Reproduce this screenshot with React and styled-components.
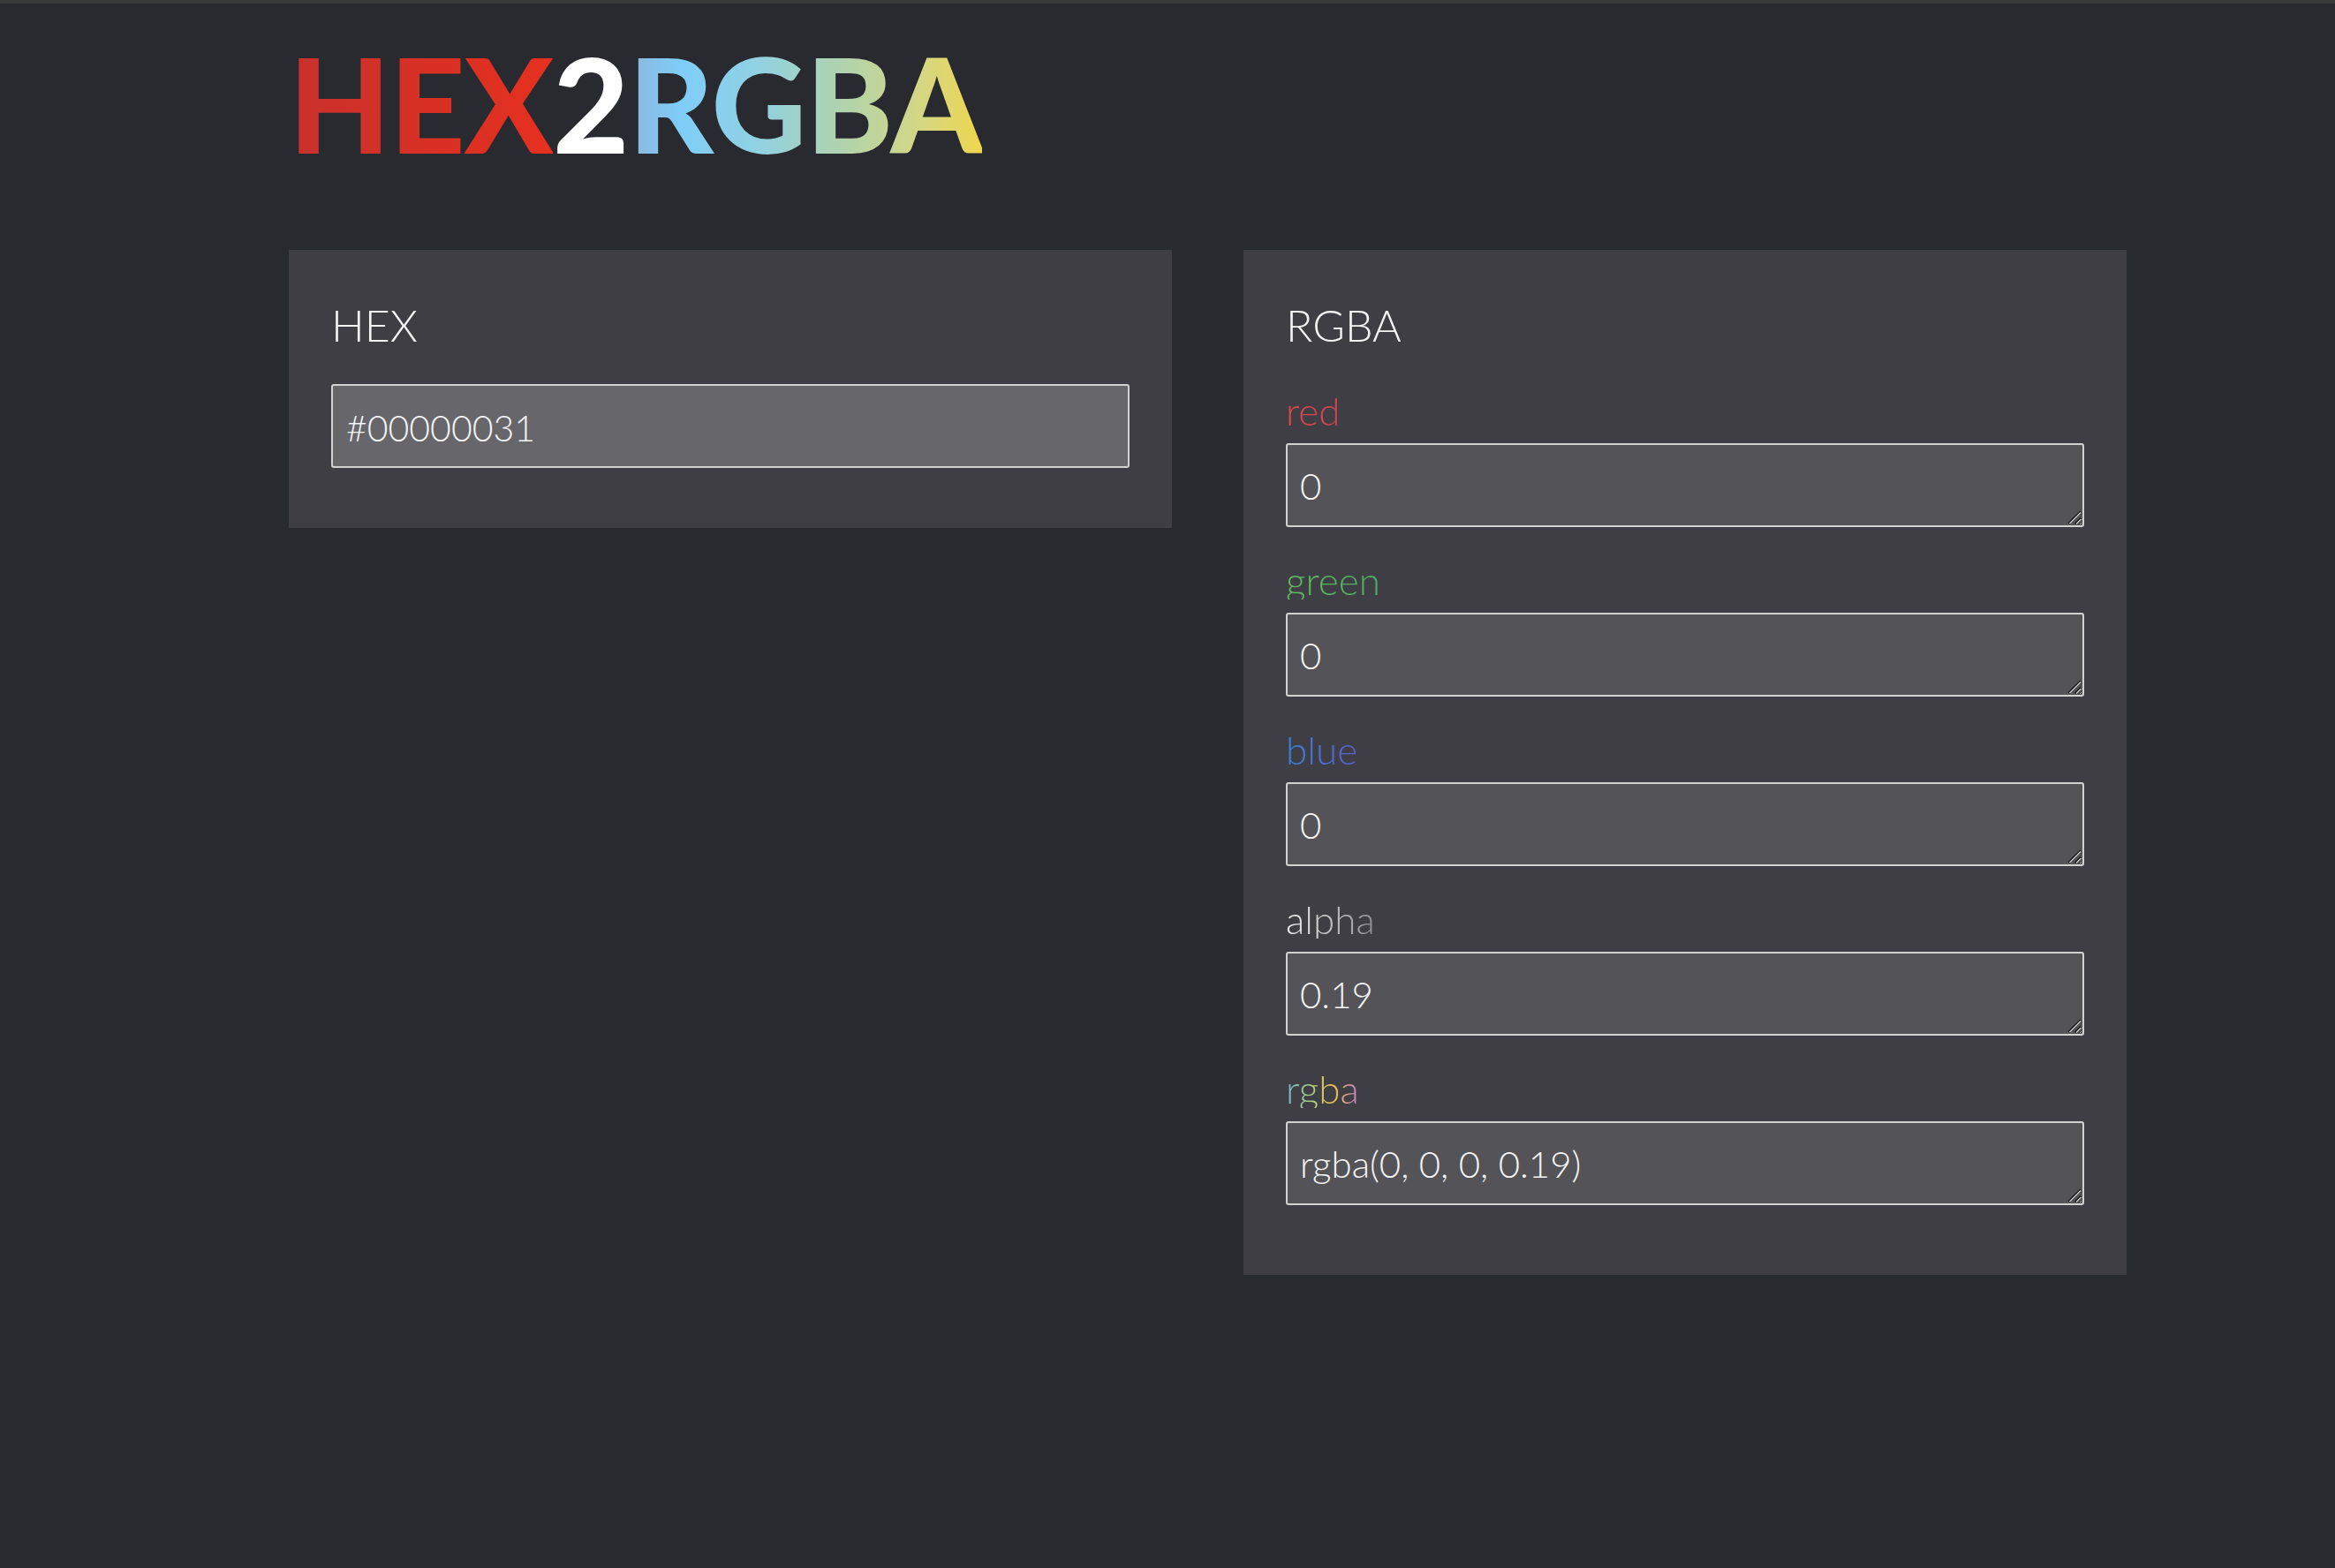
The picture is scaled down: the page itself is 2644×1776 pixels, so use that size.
import React, { useState } from "react";
import styled, { createGlobalStyle } from "styled-components";

const GlobalStyle = createGlobalStyle`
  html, body {
    margin: 0;
    padding: 0;
    background: #292a2f;
  }
  body {
    border-top: 4px solid #37383c;
    font-family: Lato, "Open Sans", sans-serif;
    color: #f2f2f2;
  }
`;

const Page = styled.div`
  padding: 38px 0 120px 327px;
`;

const Title = styled.h1`
  margin: 0 0 92px;
  font-family: Lato, sans-serif;
  font-weight: 900;
  font-size: 149px;
  line-height: 1;
  letter-spacing: -1px;
  white-space: nowrap;
`;

const Part = styled.span`
  background: ${({ $bg }) => $bg};
  -webkit-background-clip: text;
  background-clip: text;
  color: transparent;
`;

const Columns = styled.div`
  display: flex;
  align-items: flex-start;
  gap: 81px;
`;

const Panel = styled.section`
  width: 1000px;
  box-sizing: border-box;
  background: #3f3e45;
  padding: 60px 48px ${({ $bottom }) => $bottom}px;
  display: flex;
  flex-direction: column;
`;

const Heading = styled.h2`
  margin: 0;
  font-weight: 300;
  font-size: 50px;
  line-height: 50px;
  color: #f4f4f4;
`;

const HexInput = styled.input`
  margin-top: 42px;
  width: 100%;
  height: 95px;
  box-sizing: border-box;
  border: 2px solid #d2d2d2;
  border-radius: 3px;
  background: #67666b;
  color: #f4f4f4;
  padding: 4px 15px 0;
  font-family: Lato, sans-serif;
  font-weight: 300;
  font-size: 41px;
  outline: none;
`;

const Field = styled.div`
  display: flex;
  flex-direction: column;
  margin-top: ${({ $first }) => ($first ? 50 : 38)}px;
`;

const Label = styled.label`
  align-self: flex-start;
  font-weight: 300;
  font-size: 44px;
  line-height: 44px;
  margin-bottom: 15px;
  background: ${({ $bg }) => $bg};
  -webkit-background-clip: text;
  background-clip: text;
  color: transparent;
`;

const AreaBox = styled.div`
  position: relative;
`;

const Area = styled.textarea`
  display: block;
  width: 100%;
  height: 95px;
  box-sizing: border-box;
  border: 2px solid #d2d2d2;
  border-radius: 3px;
  background: #545358;
  color: #f4f4f4;
  padding: 25px 14px 0;
  font-family: Lato, sans-serif;
  font-weight: 300;
  font-size: 42px;
  line-height: 42px;
  outline: none;
  resize: both;
`;

/* Chrome's resize grip, drawn over the corner of the textarea */
const Grip = styled.span`
  position: absolute;
  right: 4px;
  bottom: 4px;
  width: 14px;
  height: 14px;
  pointer-events: none;
  background:
    linear-gradient(135deg, transparent 46%, #1f1f22 46%, #1f1f22 52%, #b9b9bd 52%, #b9b9bd 60%, transparent 60%),
    linear-gradient(135deg, transparent 74%, #1f1f22 74%, #1f1f22 80%, #b9b9bd 80%, #b9b9bd 88%, transparent 88%);
`;

const toRgba = (hex) => {
  const h = hex.replace("#", "");
  const r = parseInt(h.slice(0, 2), 16) || 0;
  const g = parseInt(h.slice(2, 4), 16) || 0;
  const b = parseInt(h.slice(4, 6), 16) || 0;
  const a = h.length >= 8 ? Math.round((parseInt(h.slice(6, 8), 16) / 255) * 100) / 100 : 1;
  return { r, g, b, a };
};

const fields = [
  { key: "r", label: "red", bg: "linear-gradient(90deg, #e0484c, #cf4350)" },
  { key: "g", label: "green", bg: "linear-gradient(90deg, #5fbd5c, #4cad63)" },
  { key: "b", label: "blue", bg: "linear-gradient(90deg, #3a82da, #5a5fd2)" },
  { key: "a", label: "alpha", bg: "linear-gradient(90deg, #f2f2f2, #8f8f93)" },
];

export default function App() {
  const [hex, setHex] = useState("#00000031");
  const c = toRgba(hex);
  const rgba = `rgba(${c.r}, ${c.g}, ${c.b}, ${c.a})`;

  return (
    <Page>
      <GlobalStyle />
      <Title>
        <Part $bg="linear-gradient(90deg, #c9312c, #e5301f)">HEX</Part>
        <Part $bg="#ffffff">2</Part>
        <Part $bg="linear-gradient(90deg, #8db6de 0%, #7fcdf8 15%, #92d1e0 38%, #b3d3ab 62%, #d3d785 82%, #efd64e 100%)">
          RGBA
        </Part>
      </Title>

      <Columns>
        <Panel $bottom={68}>
          <Heading>HEX</Heading>
          <HexInput value={hex} onChange={(e) => setHex(e.target.value)} />
        </Panel>

        <Panel $bottom={79}>
          <Heading>RGBA</Heading>
          {fields.map((f, i) => (
            <Field key={f.key} $first={i === 0}>
              <Label $bg={f.bg}>{f.label}</Label>
              <AreaBox>
                <Area value={String(c[f.key])} readOnly />
                <Grip />
              </AreaBox>
            </Field>
          ))}
          <Field>
            <Label $bg="linear-gradient(90deg, #7ab6cf 0%, #a9d07a 35%, #ecc04a 65%, #c27ad2 100%)">
              rgba
            </Label>
            <AreaBox>
              <Area value={rgba} readOnly />
              <Grip />
            </AreaBox>
          </Field>
        </Panel>
      </Columns>
    </Page>
  );
}
